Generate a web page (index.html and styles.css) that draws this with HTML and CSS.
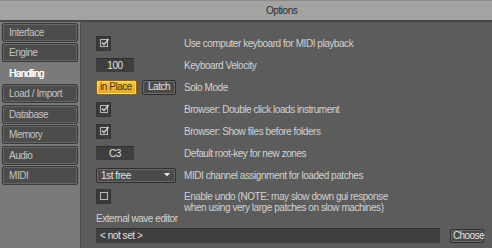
FILE: index.html
```html
<!DOCTYPE html>
<html lang="en">
<head>
    <meta charset="UTF-8">
    <title>Options</title>
    <link rel="stylesheet" href="styles.css">
</head>
<body>
    <div class="titlebar"><span class="title">Options</span></div>
    <div class="window">
        <div class="sidebar">
            <div class="tab">Interface</div>
            <div class="tab">Engine</div>
            <div class="tab active">Handling</div>
            <div class="tab">Load / Import</div>
            <div class="tab">Database</div>
            <div class="tab">Memory</div>
            <div class="tab">Audio</div>
            <div class="tab">MIDI</div>
        </div>
        <div class="main">
            <div class="row first">
                <div class="control">
                    <span class="check">
                        <svg width="15" height="15" viewBox="0 0 15 15"><rect x="4.5" y="3.5" width="7" height="7" fill="none" stroke="#b8b8b8"/><path d="M6 6.5 L8 8.6 L12.5 3" fill="none" stroke="#e0e0e0" stroke-width="1.2"/></svg>
                    </span>
                </div>
                <div class="label">Use computer keyboard for MIDI playback</div>
            </div>
            <div class="row">
                <div class="control"><span class="field">100</span></div>
                <div class="label">Keyboard Velocity</div>
            </div>
            <div class="row">
                <div class="control">
                    <span class="btn on">in Place</span>
                    <span class="btn">Latch</span>
                </div>
                <div class="label">Solo Mode</div>
            </div>
            <div class="row">
                <div class="control">
                    <span class="check">
                        <svg width="15" height="15" viewBox="0 0 15 15"><rect x="4.5" y="3.5" width="7" height="7" fill="none" stroke="#b8b8b8"/><path d="M6 6.5 L8 8.6 L12.5 3" fill="none" stroke="#e0e0e0" stroke-width="1.2"/></svg>
                    </span>
                </div>
                <div class="label">Browser: Double click loads instrument</div>
            </div>
            <div class="row">
                <div class="control">
                    <span class="check">
                        <svg width="15" height="15" viewBox="0 0 15 15"><rect x="4.5" y="3.5" width="7" height="7" fill="none" stroke="#b8b8b8"/><path d="M6 6.5 L8 8.6 L12.5 3" fill="none" stroke="#e0e0e0" stroke-width="1.2"/></svg>
                    </span>
                </div>
                <div class="label">Browser: Show files before folders</div>
            </div>
            <div class="row">
                <div class="control"><span class="field">C3</span></div>
                <div class="label">Default root-key for new zones</div>
            </div>
            <div class="row">
                <div class="control">
                    <span class="select">1st free
                        <svg class="arrow" width="6" height="4" viewBox="0 0 6 4"><path d="M0 0 H6 L3 3.5 Z" fill="#e8e8e8"/></svg>
                    </span>
                </div>
                <div class="label">MIDI channel assignment for loaded patches</div>
            </div>
            <div class="row tall">
                <div class="control">
                    <span class="check">
                        <svg width="15" height="15" viewBox="0 0 15 15"><rect x="4.5" y="3.5" width="7" height="7" fill="none" stroke="#b8b8b8"/></svg>
                    </span>
                </div>
                <div class="label">Enable undo (NOTE: may slow down gui response<br>when using very large patches on slow machines)</div>
            </div>
            <div class="caption">External wave editor</div>
            <div class="editor">
                <span class="path">&lt; not set &gt;</span>
                <span class="btn choose">Choose</span>
            </div>
        </div>
    </div>
</body>
</html>
```

FILE: styles.css
```css
body {
    margin: 0;
    width: 492px;
    height: 248px;
    overflow: hidden;
    font-family: "Liberation Sans", Arial, sans-serif;
    font-size: 10px;
    letter-spacing: -0.45px;
    color: #d2d2d2;
    background-color: #5c5c5c;
}

.titlebar {
    box-sizing: border-box;
    height: 22px;
    background-color: #a3a3a3;
    border-top: 1px solid #8a8a8a;
    border-bottom: 2px solid #474747;
    display: flex;
    align-items: center;
    padding-left: 266px;
}

.title {
    color: #2c2c2c;
}

.window {
    display: flex;
    height: 226px;
}

.sidebar {
    flex-shrink: 0;
    width: 81px;
    background-color: #7a7a7a;
    border-right: 1px solid #4e4e4e;
    padding: 1px 2px 0 2px;
    box-sizing: border-box;
}

.tab {
    width: 76px;
    height: 19px;
    margin-bottom: 1.45px;
    box-sizing: border-box;
    background-color: #4c4c4c;
    border: 1px solid #3a3a3a;
    box-shadow: inset 0 0 0 1px #666;
    border-radius: 2px;
    padding-left: 6px;
    line-height: 17px;
    color: #c4c4c4;
}

.tab.active {
    background-color: #7a7a7a;
    border-color: #7a7a7a;
    box-shadow: none;
    color: #fff;
    letter-spacing: -0.6px;
    text-shadow: 0.4px 0 0 #fff;
}

.main {
    flex: 1;
    min-width: 0;
    padding: 10px 8px 0 15px;
}

.row {
    display: flex;
    align-items: center;
    height: 22px;
}

.row.tall {
    align-items: flex-start;
    height: 27px;
}

.control {
    flex-shrink: 0;
    width: 88px;
    display: flex;
    gap: 5px;
}

.row.tall .control {
    padding-top: 3px;
}

.row.tall .label {
    padding-top: 5px;
    line-height: 11px;
}

.check {
    width: 15px;
    height: 15px;
    box-sizing: border-box;
    background-color: #3b3b3b;
    border: 1px solid #333;
    display: flex;
}

.check svg {
    margin: -1px;
}

.field {
    width: 38px;
    height: 14px;
    box-sizing: border-box;
    background-color: #3e3e3e;
    border-top: 1px solid #2f2f2f;
    text-align: center;
    line-height: 13px;
    color: #e4e4e4;
}

.btn {
    height: 15px;
    box-sizing: border-box;
    padding: 0 5px;
    line-height: 12px;
    border: 1px solid #2e2e2e;
    border-radius: 2px;
    background-color: #4a4a4a;
    box-shadow: inset 0 0 0 1px #6c6c6c;
    color: #e2e2e2;
}

.btn.on {
    width: 41px;
    padding: 0 3px;
    background: linear-gradient(#f6c94a, #e0a624);
    border-color: #8a6410;
    box-shadow: inset 0 0 0 1px #f8d978;
    color: #4a3300;
}

.select {
    width: 80px;
    height: 15px;
    box-sizing: border-box;
    display: flex;
    align-items: center;
    justify-content: space-between;
    padding: 0 5px 0 4px;
    background-color: #4a4a4a;
    border: 1px solid #2e2e2e;
    border-radius: 2px;
    box-shadow: inset 0 0 0 1px #6a6a6a;
    color: #e2e2e2;
}

.caption {
    height: 14px;
    line-height: 12px;
}

.editor {
    display: flex;
    align-items: center;
    gap: 10px;
    margin-top: 1px;
}

.path {
    flex: 1;
    height: 15px;
    box-sizing: border-box;
    padding-left: 4px;
    line-height: 14px;
    background-color: #3f3f3f;
    border-top: 1px solid #303030;
    color: #e0e0e0;
}

.btn.choose {
    width: 34px;
    height: 14px;
    padding: 0 2px;
    line-height: 11px;
    letter-spacing: -0.6px;
}
```
